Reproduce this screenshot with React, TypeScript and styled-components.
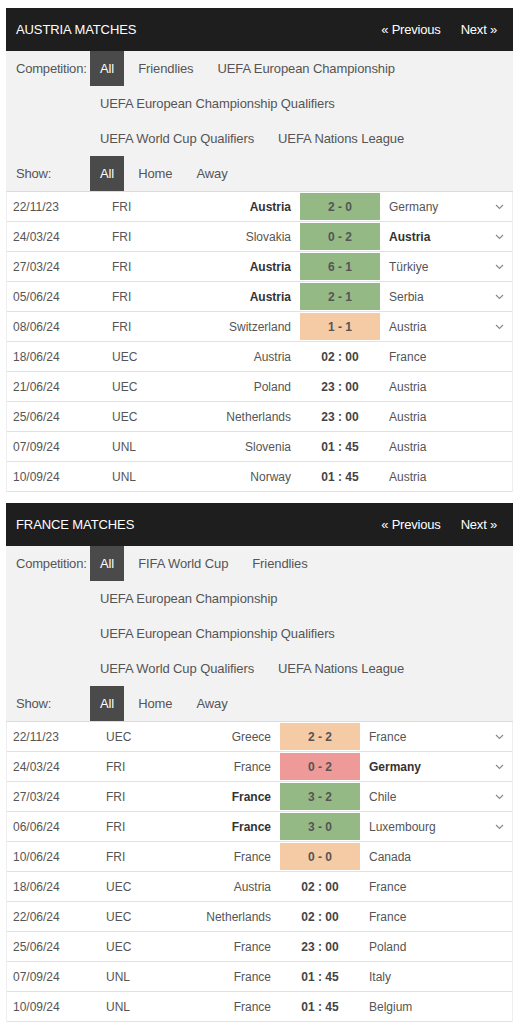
import React from 'react'
import styled, { createGlobalStyle } from 'styled-components'

type Result = 'win' | 'draw' | 'loss'

interface Match {
  date: string
  comp: string
  home: string
  away: string
  score?: string
  time?: string
  result?: Result
  bold?: 'home' | 'away'
  more?: boolean
}

interface Section {
  title: string
  competitions: string[][]
  cols: string
  matches: Match[]
}

const SECTIONS: Section[] = [
  {
    title: 'AUSTRIA MATCHES',
    competitions: [
      ['All', 'Friendlies', 'UEFA European Championship'],
      ['UEFA European Championship Qualifiers'],
      ['UEFA World Cup Qualifiers', 'UEFA Nations League']
    ],
    cols: '99px 90px 103px 82px 1fr 26px',
    matches: [
      { date: '22/11/23', comp: 'FRI', home: 'Austria', away: 'Germany', score: '2 - 0', result: 'win', bold: 'home', more: true },
      { date: '24/03/24', comp: 'FRI', home: 'Slovakia', away: 'Austria', score: '0 - 2', result: 'win', bold: 'away', more: true },
      { date: '27/03/24', comp: 'FRI', home: 'Austria', away: 'Türkiye', score: '6 - 1', result: 'win', bold: 'home', more: true },
      { date: '05/06/24', comp: 'FRI', home: 'Austria', away: 'Serbia', score: '2 - 1', result: 'win', bold: 'home', more: true },
      { date: '08/06/24', comp: 'FRI', home: 'Switzerland', away: 'Austria', score: '1 - 1', result: 'draw', more: true },
      { date: '18/06/24', comp: 'UEC', home: 'Austria', away: 'France', time: '02 : 00' },
      { date: '21/06/24', comp: 'UEC', home: 'Poland', away: 'Austria', time: '23 : 00' },
      { date: '25/06/24', comp: 'UEC', home: 'Netherlands', away: 'Austria', time: '23 : 00' },
      { date: '07/09/24', comp: 'UNL', home: 'Slovenia', away: 'Austria', time: '01 : 45' },
      { date: '10/09/24', comp: 'UNL', home: 'Norway', away: 'Austria', time: '01 : 45' }
    ]
  },
  {
    title: 'FRANCE MATCHES',
    competitions: [
      ['All', 'FIFA World Cup', 'Friendlies'],
      ['UEFA European Championship'],
      ['UEFA European Championship Qualifiers'],
      ['UEFA World Cup Qualifiers', 'UEFA Nations League']
    ],
    cols: '93px 90px 89px 82px 1fr 26px',
    matches: [
      { date: '22/11/23', comp: 'UEC', home: 'Greece', away: 'France', score: '2 - 2', result: 'draw', more: true },
      { date: '24/03/24', comp: 'FRI', home: 'France', away: 'Germany', score: '0 - 2', result: 'loss', bold: 'away', more: true },
      { date: '27/03/24', comp: 'FRI', home: 'France', away: 'Chile', score: '3 - 2', result: 'win', bold: 'home', more: true },
      { date: '06/06/24', comp: 'FRI', home: 'France', away: 'Luxembourg', score: '3 - 0', result: 'win', bold: 'home', more: true },
      { date: '10/06/24', comp: 'FRI', home: 'France', away: 'Canada', score: '0 - 0', result: 'draw' },
      { date: '18/06/24', comp: 'UEC', home: 'Austria', away: 'France', time: '02 : 00' },
      { date: '22/06/24', comp: 'UEC', home: 'Netherlands', away: 'France', time: '02 : 00' },
      { date: '25/06/24', comp: 'UEC', home: 'France', away: 'Poland', time: '23 : 00' },
      { date: '07/09/24', comp: 'UNL', home: 'France', away: 'Italy', time: '01 : 45' },
      { date: '10/09/24', comp: 'UNL', home: 'France', away: 'Belgium', time: '01 : 45' }
    ]
  }
]

const RESULT_BG: Record<Result, string> = {
  win: '#95b985',
  draw: '#f5cba5',
  loss: '#ee9a98'
}

const GlobalStyle = createGlobalStyle`
  body {
    margin: 0;
    background: #ffffff;
    font-family: "Liberation Sans", Arial, sans-serif;
  }
`

const Page = styled.div`
  display: flex;
  flex-direction: column;
  gap: 11px;
  padding: 8px 9px 0 6px;
`

const Panel = styled.section`
  width: 507px;
`

const Header = styled.div`
  height: 43px;
  background: #1e1e1e;
  color: #ffffff;
  display: flex;
  align-items: center;
  justify-content: space-between;
  padding: 0 16px 0 10px;
  font-size: 13px;
`

const Title = styled.span`
  letter-spacing: -0.1px;
`

const Pager = styled.div`
  display: flex;
  gap: 20px;
  letter-spacing: -0.2px;
`

const Filters = styled.div`
  background: #f2f2f2;
  border-bottom: 1px solid #dcdcdc;
`

const FilterGroup = styled.div`
  display: flex;
`

const FilterLabel = styled.div`
  width: 84px;
  flex-shrink: 0;
  padding-left: 10px;
  box-sizing: border-box;
  height: 35px;
  line-height: 35px;
  font-size: 13px;
  color: #555;
  letter-spacing: -0.2px;
`

const FilterLines = styled.div`
  display: flex;
  flex-direction: column;
`

const FilterLine = styled.div`
  display: flex;
  gap: 4px;
  height: 35px;
`

const FilterItem = styled.span<{ $active?: boolean }>`
  padding: 0 10px;
  line-height: 35px;
  font-size: 13px;
  letter-spacing: -0.1px;
  white-space: nowrap;
  color: ${(p) => (p.$active ? '#ffffff' : '#555')};
  background: ${(p) => (p.$active ? '#4a4a4a' : 'transparent')};
`

const Table = styled.div`
  border-left: 1px solid #eeeeee;
  border-right: 1px solid #eeeeee;
`

const Row = styled.div<{ $cols: string }>`
  display: grid;
  grid-template-columns: ${(p) => p.$cols};
  height: 30px;
  box-sizing: border-box;
  border-bottom: 1px solid #e2e2e2;
  font-size: 12px;
  color: #555;
  align-items: stretch;
`

const Cell = styled.div<{ $align?: 'left' | 'right' | 'center'; $bold?: boolean }>`
  display: flex;
  align-items: center;
  justify-content: ${(p) => (p.$align === 'right' ? 'flex-end' : p.$align === 'center' ? 'center' : 'flex-start')};
  padding: ${(p) => (p.$align === 'right' ? '0 8px 0 0' : p.$align === 'center' ? '0' : '0 0 0 6px')};
  font-weight: ${(p) => (p.$bold ? 'bold' : 'normal')};
  color: ${(p) => (p.$bold ? '#333' : '#555')};
  white-space: nowrap;
`

const AwayCell = styled(Cell)`
  padding-left: 8px;
`

const ScoreBox = styled.div<{ $result: Result }>`
  margin: 1px;
  background: ${(p) => RESULT_BG[p.$result]};
  display: flex;
  align-items: center;
  justify-content: center;
  font-weight: bold;
  color: #555;
`

const Time = styled.div`
  display: flex;
  align-items: center;
  justify-content: center;
  font-weight: bold;
  color: #444;
`

const Chevron = () => (
  <svg width="9" height="6" viewBox="0 0 9 6">
    <path d="M1 1l3.5 3.5L8 1" fill="none" stroke="#8a8a8a" strokeWidth="1.2" />
  </svg>
)

const MatchRow = ({ m, cols }: { m: Match; cols: string }) => (
  <Row $cols={cols}>
    <Cell>{m.date}</Cell>
    <Cell>{m.comp}</Cell>
    <Cell $align="right" $bold={m.bold === 'home'}>
      {m.home}
    </Cell>
    {m.score && m.result ? <ScoreBox $result={m.result}>{m.score}</ScoreBox> : <Time>{m.time}</Time>}
    <AwayCell $bold={m.bold === 'away'}>{m.away}</AwayCell>
    <Cell $align="center">{m.more && <Chevron />}</Cell>
  </Row>
)

const MatchPanel = ({ s }: { s: Section }) => (
  <Panel>
    <Header>
      <Title>{s.title}</Title>
      <Pager>
        <span>« Previous</span>
        <span>Next »</span>
      </Pager>
    </Header>
    <Filters>
      <FilterGroup>
        <FilterLabel>Competition:</FilterLabel>
        <FilterLines>
          {s.competitions.map((line, i) => (
            <FilterLine key={i}>
              {line.map((c) => (
                <FilterItem key={c} $active={c === 'All'}>
                  {c}
                </FilterItem>
              ))}
            </FilterLine>
          ))}
        </FilterLines>
      </FilterGroup>
      <FilterGroup>
        <FilterLabel>Show:</FilterLabel>
        <FilterLine>
          <FilterItem $active>All</FilterItem>
          <FilterItem>Home</FilterItem>
          <FilterItem>Away</FilterItem>
        </FilterLine>
      </FilterGroup>
    </Filters>
    <Table>
      {s.matches.map((m) => (
        <MatchRow key={m.date + m.home} m={m} cols={s.cols} />
      ))}
    </Table>
  </Panel>
)

export default function App() {
  return (
    <>
      <GlobalStyle />
      <Page>
        {SECTIONS.map((s) => (
          <MatchPanel key={s.title} s={s} />
        ))}
      </Page>
    </>
  )
}
